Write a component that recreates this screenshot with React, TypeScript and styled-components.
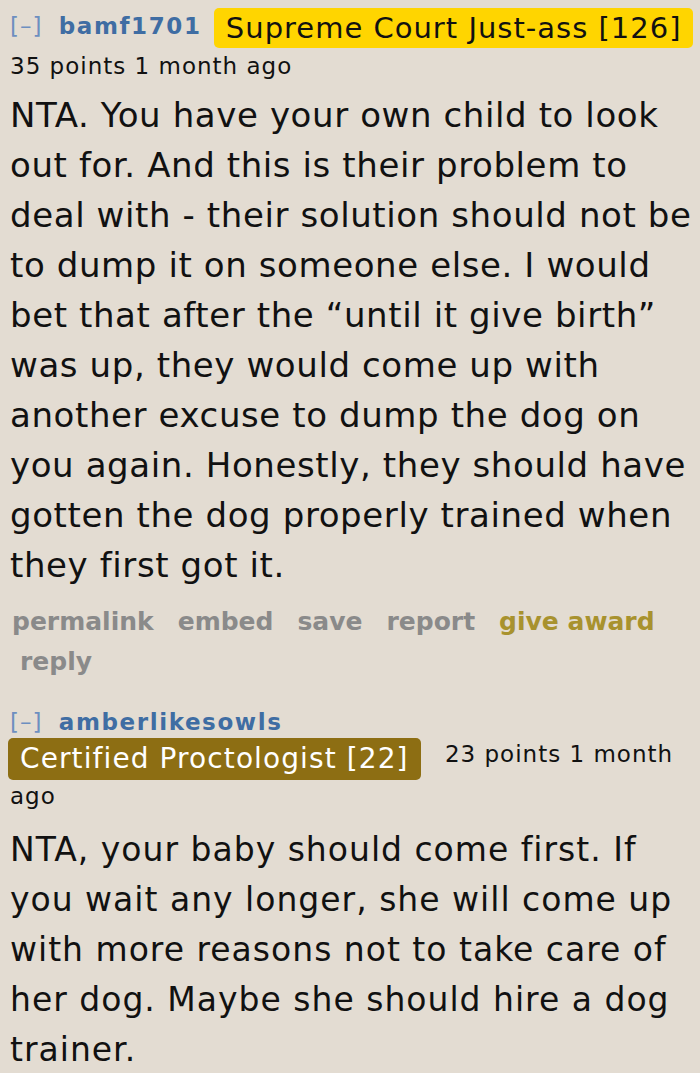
import React from "react";
import styled, {createGlobalStyle} from "styled-components";

const GlobalStyle = createGlobalStyle`
    html, body {
        margin: 0;
        padding: 0;
        background: #e3dcd2;
    }
`

type Tone = "gold" | "brown"

type CommentPropsType = {
    author: string
    flair: string
    flairTone: Tone
    score: string
    age: string
    text: string
    narrow?: boolean
    showButtons?: boolean
}

const Comment = (props: CommentPropsType) => {
    return (
        <StyledComment>
            <Tagline narrow={props.narrow}>
                <Expand>[–]</Expand>{" "}
                <Author>{props.author}</Author>{" "}
                <Flair tone={props.flairTone} narrow={props.narrow}>{props.flair}</Flair>{" "}
                <Score narrow={props.narrow}>{props.score} {props.age}</Score>
            </Tagline>
            <Body narrow={props.narrow}>{props.text}</Body>
            {props.showButtons && (
                <Buttons>
                    <li>permalink</li>
                    <li>embed</li>
                    <li>save</li>
                    <li>report</li>
                    <Award>give award</Award>
                    <li>reply</li>
                </Buttons>
            )}
        </StyledComment>
    );
};

const App = () => {
    return (
        <Page>
            <GlobalStyle/>
            <Comment
                author="bamf1701"
                flair="Supreme Court Just-ass [126]"
                flairTone="gold"
                score="35 points"
                age="1 month ago"
                showButtons
                text={"NTA. You have your own child to look out for. And this is their problem to deal with - their solution should not be to dump it on someone else. I would bet that after the \u201cuntil it give birth\u201d was up, they would come up with another excuse to dump the dog on you again. Honestly, they should have gotten the dog properly trained when they first got it."}
            />
            <Comment
                author="amberlikesowls"
                flair="Certified Proctologist [22]"
                flairTone="brown"
                score="23 points"
                age="1 month ago"
                narrow
                text="NTA, your baby should come first. If you wait any longer, she will come up with more reasons not to take care of her dog. Maybe she should hire a dog trainer."
            />
        </Page>
    );
};

export default App;

const Page = styled.div`
    width: 700px;
    min-height: 1073px;
    box-sizing: border-box;
    padding: 8px 2px 0 10px;
    background: #e3dcd2;
    font-family: "DejaVu Sans", Verdana, sans-serif;
    color: #111;
    overflow: hidden;
`

const StyledComment = styled.div`
    & + & {
        margin-top: 24px;
    }
`

const Tagline = styled.div<{ narrow?: boolean }>`
    font-size: 23px;
    letter-spacing: 1px;
    line-height: ${props => props.narrow ? "32px" : "36px"};
`

const Expand = styled.span`
    color: #6d8fc0;
    margin-right: 8px;
`

const Author = styled.span`
    color: #3f6da3;
    font-weight: bold;
    letter-spacing: 1.6px;
    margin-right: 4px;
`

const Flair = styled.span<{ tone: Tone, narrow?: boolean }>`
    display: inline-block;
    vertical-align: top;
    margin-left: ${props => props.narrow ? "-2px" : "0"};
    padding: 0 12px;
    border-radius: 5px;
    font-size: ${props => props.narrow ? "28px" : "29px"};
    letter-spacing: ${props => props.narrow ? "1.1px" : "1px"};
    line-height: ${props => props.narrow ? "42px" : "40px"};
    background: ${props => props.tone === "gold" ? "#ffd500" : "#8d6e13"};
    color: ${props => props.tone === "gold" ? "#111" : "#fff"};
`

const Score = styled.span<{ narrow?: boolean }>`
    margin-left: ${props => props.narrow ? "16px" : "0"};
    color: #111;
`

const Body = styled.div<{ narrow?: boolean }>`
    margin-top: ${props => props.narrow ? "13px" : "6px"};
    font-size: ${props => props.narrow ? "33px" : "34px"};
    letter-spacing: ${props => props.narrow ? "1px" : "0.6px"};
    line-height: 50px;
`

const Buttons = styled.ul`
    margin: 12px 0 0;
    padding: 0;
    list-style: none;
    font-size: 25px;
    font-weight: bold;
    line-height: 40px;
    color: #8a8a8a;

    li {
        display: inline-block;
        padding-left: 10px;
        margin-right: 14px;
    }

    li:first-child {
        padding-left: 2px;
    }
`

const Award = styled.li`
    color: #a8922e;
`
